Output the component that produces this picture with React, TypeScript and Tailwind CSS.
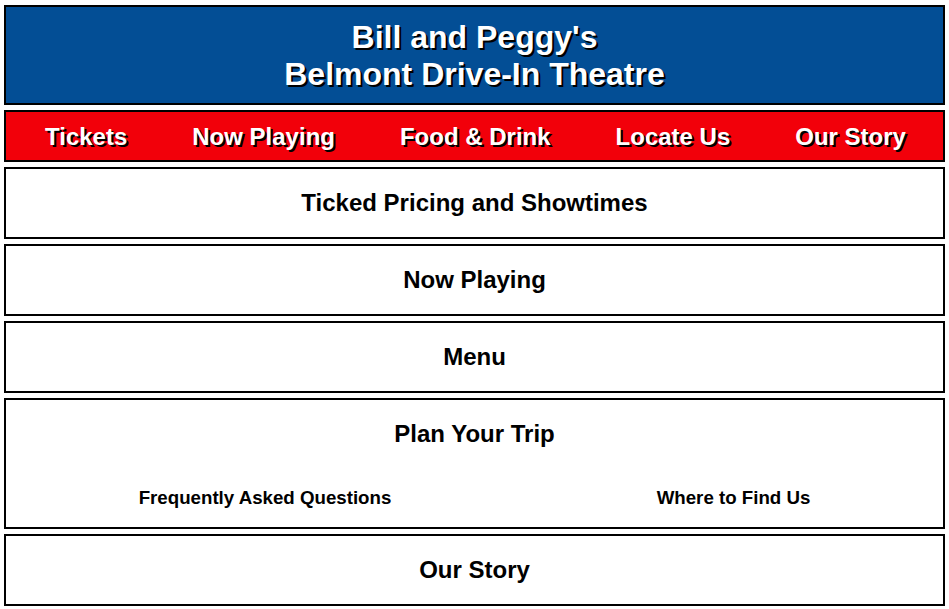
const navItems = ['Tickets', 'Now Playing', 'Food & Drink', 'Locate Us', 'Our Story'];

function Section({ title, children }: { title: string; children?: React.ReactNode }) {
  return (
    <section className="border-2 border-black bg-white">
      <h2 className="h-[68px] flex items-center justify-center text-[24px] font-bold text-black">{title}</h2>
      {children}
    </section>
  );
}

export default function App() {
  return (
    <div
      className="min-h-screen bg-white px-[4px] pt-[5px] flex flex-col gap-[5px]"
      style={{ fontFamily: '"Liberation Sans", Arial, sans-serif' }}
    >
      <header className="border-2 border-black bg-[#034e95] h-[100px] flex flex-col items-center justify-center pt-[2px]">
        <h1 className="text-white text-[32px] font-bold leading-[37px] text-center [text-shadow:2px_2px_0_#000]">
          Bill and Peggy's
          <br />
          Belmont Drive-In Theatre
        </h1>
      </header>

      <nav className="border-2 border-black bg-[#f2000a] h-[52px] flex items-center justify-between pl-[39px] pr-[37px] pt-[1px]">
        {navItems.map((item) => (
          <a
            key={item}
            href="#"
            className="text-white text-[24px] font-bold [text-shadow:2px_2px_0_#000]"
          >
            {item}
          </a>
        ))}
      </nav>

      <Section title="Ticked Pricing and Showtimes" />
      <Section title="Now Playing" />
      <Section title="Menu" />
      <Section title="Plan Your Trip">
        <div className="flex justify-around items-center h-[59px] pt-[2px]">
          <a href="#" className="text-black text-[18.7px] font-bold">Frequently Asked Questions</a>
          <a href="#" className="text-black text-[18.7px] font-bold">Where to Find Us</a>
        </div>
      </Section>
      <Section title="Our Story" />
    </div>
  );
}
